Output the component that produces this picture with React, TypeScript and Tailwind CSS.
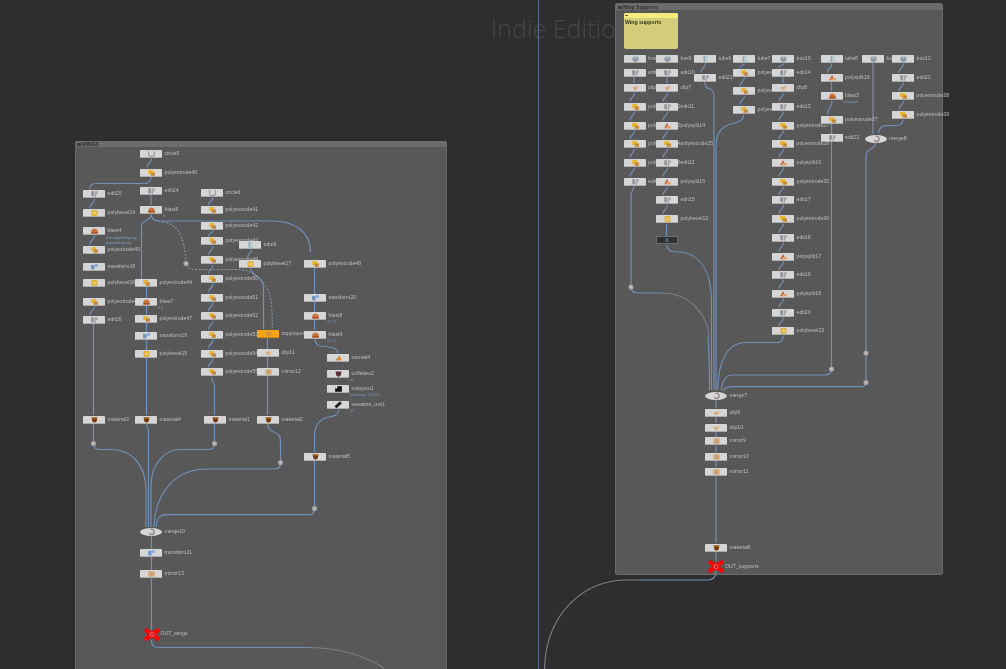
type Kind =
  | "box" | "edit" | "extrude" | "bevel" | "blast" | "transform" | "circle" | "tube" | "clip"
  | "mirror" | "material" | "normal" | "uvflatten" | "uvlayout" | "visualize" | "merge" | "split" | "copy" | "null";

type GraphNode = { name: string; x: number; y: number; kind: Kind; sub?: string };

function Icon({ kind }: { kind: Kind }) {
  switch (kind) {
    case "box":
      return (
        <g>
          <path d="M-3 -2 L0 -3.2 L3 -2 L3 1.8 L0 3.2 L-3 1.8 Z" fill="#8d9aa6" />
          <path d="M-3 -2 L0 -3.2 L3 -2 L0 -0.8 Z" fill="#b5bec6" />
        </g>
      );
    case "edit":
      return (
        <g>
          <path d="M-3.2 -2.8 H-0.6 V1 C-0.6 3 -3.2 3 -3.2 1 Z" fill="#8c9298" />
          <rect x="0.2" y="-2.8" width="3" height="3.2" fill="#a3a8ad" />
          <rect x="0.2" y="0.4" width="1.2" height="2.4" fill="#8c9298" />
        </g>
      );
    case "extrude":
      return (
        <g>
          <rect x="-3.4" y="-3" width="5" height="4" fill="#e8b733" />
          <rect x="-0.8" y="-0.6" width="4.2" height="3.4" fill="#c4893a" />
        </g>
      );
    case "bevel":
      return (
        <g>
          <rect x="-3" y="-3" width="6" height="6" rx="1" fill="#e0b23e" />
          <rect x="-1.4" y="-1.4" width="2.8" height="2.8" fill="#eecb70" />
        </g>
      );
    case "blast":
      return (
        <g>
          <path d="M-3.2 2.6 V0.4 C-3.2 -1.4 -1.4 -2.4 0 -2.4 C1.4 -2.4 3.2 -1.4 3.2 0.4 V2.6 Z" fill="#c8743a" />
          <rect x="-3.2" y="0.8" width="6.4" height="1.8" fill="#a9562a" />
        </g>
      );
    case "split":
      return (
        <g>
          <path d="M-3.4 2.4 L-0.4 -3 L1.2 1 Z" fill="#c9502c" />
          <rect x="-1.4" y="0" width="4.8" height="2.4" fill="#d9a36a" />
        </g>
      );
    case "transform":
      return (
        <g>
          <rect x="-3.4" y="-2" width="3.4" height="4.4" fill="#6f94c4" />
          <rect x="0" y="-3" width="3.4" height="3" fill="#8fb0d8" />
        </g>
      );
    case "circle":
      return <path d="M-2.8 -2.8 V0.5 C-2.8 3.4 2.8 3.4 2.8 0.5 V-2.8" fill="none" stroke="#8f959b" strokeWidth="1.1" />;
    case "tube":
      return (
        <g>
          <rect x="-2" y="-3.2" width="4" height="6.4" rx="1.3" fill="#93a9b8" />
          <rect x="-0.3" y="-3.2" width="2.3" height="6.4" rx="1" fill="#c0d0da" />
        </g>
      );
    case "clip":
      return <path d="M-3 -0.8 L3 -2 L1.2 1.6 L-1.2 2.2 Z" fill="#d9ab78" />;
    case "mirror":
      return (
        <g>
          <rect x="-3.2" y="-2.6" width="6.4" height="5.2" fill="#d3a878" />
          <rect x="-0.3" y="-2.6" width="0.6" height="5.2" fill="#b88d5c" />
        </g>
      );
    case "material":
      return (
        <g>
          <path d="M-2.8 -2.6 H2.8 L2.2 1.4 L0 2.8 L-2.2 1.4 Z" fill="#6f3a12" />
          <rect x="-2.8" y="-2.6" width="5.6" height="1.4" fill="#a8651f" />
        </g>
      );
    case "normal":
      return <path d="M-3.2 2.6 L-1 -0.4 L1 -2.4 L3.4 2.6 Z" fill="#d1923f" />;
    case "uvflatten":
      return <path d="M-3 -2.6 H3 L2.2 1.4 L0 3 L-2.2 1.4 Z" fill="#5d3034" />;
    case "uvlayout":
      return (
        <g>
          <rect x="-3.4" y="-2.8" width="6.8" height="5.6" fill="#141414" />
          <rect x="-3.4" y="-2.8" width="2.2" height="2.2" fill="#e8e8e8" />
        </g>
      );
    case "visualize":
      return <path d="M-3 2.2 L2.4 -2.6" stroke="#1b1b1b" strokeWidth="2.8" />;
    case "merge":
      return <path d="M-1 -2.6 A2.6 2.6 0 1 1 -2.2 1.2" fill="none" stroke="#8b7f88" strokeWidth="1.3" />;
    case "copy":
      return <rect x="-2.8" y="-2.4" width="5.6" height="4.8" fill="#d7962c" />;
    case "null":
      return <rect x="-1.5" y="-2" width="3" height="4" fill="#4d6070" />;
  }
}

const leftNodes: GraphNode[] = [
  { name: "circle5", x: 140, y: 153.5, kind: "circle" },
  { name: "polyextrude40", x: 140, y: 172.5, kind: "extrude" },
  { name: "edit24", x: 140, y: 191, kind: "edit" },
  { name: "blast6", x: 140, y: 210, kind: "blast", sub: "0" },
  { name: "edit25", x: 83, y: 194, kind: "edit" },
  { name: "polybevel14", x: 83, y: 212.5, kind: "bevel" },
  { name: "blast4", x: 83, y: 230.5, kind: "blast" },
  { name: "polyextrude45", x: 83, y: 249.5, kind: "extrude" },
  { name: "transform18", x: 83, y: 266.5, kind: "transform" },
  { name: "polybevel16", x: 83, y: 283, kind: "bevel" },
  { name: "polyextrude46", x: 83, y: 301.5, kind: "extrude" },
  { name: "edit26", x: 83, y: 320, kind: "edit" },
  { name: "polyextrude44", x: 135, y: 283, kind: "extrude" },
  { name: "blast7", x: 135, y: 301.5, kind: "blast", sub: "0 0" },
  { name: "polyextrude47", x: 135, y: 319, kind: "extrude" },
  { name: "transform19", x: 135, y: 335.5, kind: "transform" },
  { name: "polybevel15", x: 135, y: 353.5, kind: "bevel" },
  { name: "circle6", x: 201, y: 192.5, kind: "circle" },
  { name: "polyextrude41", x: 201, y: 210, kind: "extrude" },
  { name: "polyextrude42", x: 201, y: 225.5, kind: "extrude" },
  { name: "polyextrude43", x: 201, y: 241, kind: "extrude" },
  { name: "polyextrude49", x: 201, y: 260, kind: "extrude" },
  { name: "polyextrude50", x: 201, y: 278.5, kind: "extrude" },
  { name: "polyextrude51", x: 201, y: 297.5, kind: "extrude" },
  { name: "polyextrude52", x: 201, y: 316, kind: "extrude" },
  { name: "polyextrude53", x: 201, y: 334.5, kind: "extrude" },
  { name: "polyextrude54", x: 201, y: 353.5, kind: "extrude" },
  { name: "polyextrude55", x: 201, y: 372, kind: "extrude" },
  { name: "tube9", x: 239, y: 244.5, kind: "tube" },
  { name: "polybevel17", x: 239, y: 263.5, kind: "bevel" },
  { name: "polyextrude48", x: 304, y: 263.5, kind: "extrude" },
  { name: "transform20", x: 304, y: 297.5, kind: "transform" },
  { name: "blast8", x: 304, y: 316, kind: "blast", sub: "12 17" },
  { name: "blast9", x: 304, y: 334.5, kind: "blast", sub: "12 17" },
  { name: "copytopoints1", x: 257, y: 333.5, kind: "copy" },
  { name: "clip11", x: 257, y: 353, kind: "clip" },
  { name: "mirror12", x: 257, y: 372, kind: "mirror" },
  { name: "normal4", x: 327, y: 358, kind: "normal" },
  { name: "uvflatten2", x: 327, y: 373.5, kind: "uvflatten", sub: "uv" },
  { name: "uvlayout1", x: 327, y: 388.5, kind: "uvlayout", sub: "Coverage: 58.10%" },
  { name: "visualize_uvs1", x: 327, y: 404.5, kind: "visualize", sub: "@" },
  { name: "material3", x: 83, y: 419.5, kind: "material" },
  { name: "material4", x: 135, y: 419.5, kind: "material" },
  { name: "material1", x: 204, y: 419.5, kind: "material" },
  { name: "material2", x: 257, y: 419.5, kind: "material" },
  { name: "material5", x: 304, y: 456.5, kind: "material" },
  { name: "merge10", x: 140, y: 531.5, kind: "merge" },
  { name: "transform21", x: 140, y: 552.5, kind: "transform" },
  { name: "mirror13", x: 140, y: 573.5, kind: "mirror" },
];

const rightNodes: GraphNode[] = [
  { name: "box8", x: 623.5, y: 58.5, kind: "box" },
  { name: "edit9", x: 623.5, y: 72.5, kind: "edit" },
  { name: "clip6", x: 623.5, y: 88, kind: "clip" },
  { name: "polyextrude22", x: 623.5, y: 106.5, kind: "extrude" },
  { name: "polyextrude23", x: 623.5, y: 125.5, kind: "extrude" },
  { name: "polyextrude24", x: 623.5, y: 144, kind: "extrude" },
  { name: "polyextrude26", x: 623.5, y: 162.5, kind: "extrude" },
  { name: "edit16", x: 623.5, y: 181.5, kind: "edit" },
  { name: "box9", x: 656, y: 58.5, kind: "box" },
  { name: "edit10", x: 656, y: 72.5, kind: "edit" },
  { name: "clip7", x: 656, y: 88, kind: "clip" },
  { name: "edit11", x: 656, y: 106.5, kind: "edit" },
  { name: "polysplit14", x: 656, y: 125.5, kind: "split" },
  { name: "polyextrude25", x: 656, y: 144, kind: "extrude" },
  { name: "edit12", x: 656, y: 162.5, kind: "edit" },
  { name: "polysplit15", x: 656, y: 181.5, kind: "split" },
  { name: "edit15", x: 656, y: 200, kind: "edit" },
  { name: "polybevel12", x: 656, y: 219, kind: "bevel" },
  { name: "tube6", x: 694, y: 58.5, kind: "tube" },
  { name: "edit21", x: 694, y: 77.5, kind: "edit" },
  { name: "tube7", x: 733, y: 58.5, kind: "tube" },
  { name: "polyextrude29", x: 733, y: 72.5, kind: "extrude" },
  { name: "polyextrude30", x: 733, y: 91, kind: "extrude" },
  { name: "polyextrude31", x: 733, y: 109.5, kind: "extrude" },
  { name: "box10", x: 772, y: 58.5, kind: "box" },
  { name: "edit14", x: 772, y: 72.5, kind: "edit" },
  { name: "clip8", x: 772, y: 88, kind: "clip" },
  { name: "edit13", x: 772, y: 106.5, kind: "edit" },
  { name: "polyextrude27", x: 772, y: 125.5, kind: "extrude" },
  { name: "polyextrude28", x: 772, y: 144, kind: "extrude" },
  { name: "polysplit16", x: 772, y: 162.5, kind: "split" },
  { name: "polyextrude35", x: 772, y: 181.5, kind: "extrude" },
  { name: "edit17", x: 772, y: 200, kind: "edit" },
  { name: "polyextrude36", x: 772, y: 219, kind: "extrude" },
  { name: "edit18", x: 772, y: 237.5, kind: "edit" },
  { name: "polysplit17", x: 772, y: 256.5, kind: "split" },
  { name: "edit19", x: 772, y: 275, kind: "edit" },
  { name: "polysplit18", x: 772, y: 293.5, kind: "split" },
  { name: "edit20", x: 772, y: 312.5, kind: "edit" },
  { name: "polybevel13", x: 772, y: 331, kind: "bevel" },
  { name: "tube8", x: 820.5, y: 58.5, kind: "tube" },
  { name: "polysplit19", x: 820.5, y: 77.5, kind: "split" },
  { name: "blast3", x: 820.5, y: 96, kind: "blast", sub: "selection" },
  { name: "polyextrude37", x: 820.5, y: 119.5, kind: "extrude" },
  { name: "edit23", x: 820.5, y: 138, kind: "edit" },
  { name: "box11", x: 862, y: 58.5, kind: "box" },
  { name: "merge8", x: 864.5, y: 138.5, kind: "merge" },
  { name: "box12", x: 892, y: 58.5, kind: "box" },
  { name: "edit22", x: 892, y: 77.5, kind: "edit" },
  { name: "polyextrude38", x: 892, y: 96, kind: "extrude" },
  { name: "polyextrude39", x: 892, y: 114.5, kind: "extrude" },
  { name: "merge7", x: 705, y: 395.5, kind: "merge" },
  { name: "clip9", x: 705, y: 412.5, kind: "clip" },
  { name: "clip10", x: 705, y: 427.5, kind: "clip" },
  { name: "mirror9", x: 705, y: 441, kind: "mirror" },
  { name: "mirror10", x: 705, y: 456.5, kind: "mirror" },
  { name: "mirror11", x: 705, y: 471.5, kind: "mirror" },
  { name: "material6", x: 705, y: 547.5, kind: "material" },
];

const nodes = [...leftNodes, ...rightNodes];

// short S-shaped wire between two stacked nodes
const s = (cx: number, y1: number, y2: number) => {
  const m = (y1 + y2) / 2;
  return `M${cx + 0.5} ${y1 + 5} C${cx + 0.5} ${m} ${cx - 4} ${m} ${cx - 4} ${y2 - 5}`;
};
const v = (x: number, y1: number, y2: number) => `M${x} ${y1} V${y2}`;

const wires = [
  // wings
  s(151, 153.5, 172.5),
  "M151 177 C151 181 148 183.5 144 183.5 H96 C92 183.5 89.5 186 89.5 190",
  v(151, 195, 205),
  s(94, 194, 212.5),
  s(94, 230.5, 249.5),
  s(94, 301.5, 320),
  v(93.5, 324, 415),
  v(93.5, 423, 443),
  "M151 215 C151 219 147 220 145 221 C142.5 222 141.5 224 141.5 227 V279",
  "M151 215 C152 219 155 221 160 221 H272 C295 221 310.5 232 310.5 252",
  v(314.5, 267, 330),
  "M315 339 C315 344 318 346 323 346.5 C332 347 337.5 348 338 353",
  v(146.5, 287, 415),
  "M146.5 423 C146.5 427 148.5 427 148.5 431 V527",
  s(212.5, 192.5, 210),
  s(212.5, 225.5, 241),
  s(212.5, 241, 260),
  s(212.5, 260, 278.5),
  s(212.5, 278.5, 297.5),
  s(212.5, 297.5, 316),
  s(212.5, 316, 334.5),
  s(212.5, 334.5, 353.5),
  s(212.5, 353.5, 372),
  "M211.5 377 C211.5 383 214.5 382 214.5 387 V415",
  v(214.5, 423, 443),
  s(251, 244.5, 263.5),
  "M250.5 268 C251 273 255 275 258 277 C262 280 263.5 283 263.5 289 V329",
  v(267.5, 338, 415),
  "M267.5 423 C267.5 429 270 431 274 432 C279 433.5 280.5 436 280.5 441 V462",
  "M339 410 C338 415 335 416 329 417 C319 419 314.5 425 314.5 436 V452",
  v(314.5, 461, 508),
  "M93.5 443 C93.5 447 95 449.5 99 449.5 H112 C132 449.5 146 466 146 490 V527",
  "M214.5 443 C214.5 447 213 449.5 209 449.5 H180 C164 449.5 151 465 151 486 V527",
  "M280.5 463 C280.5 466.5 279 469 275 469 H207 C176 469 155 492 154 527",
  "M314.5 509 C314.5 512.5 312.5 514.7 309 514.7 H166 C160 514.7 157 518 156 527",
  v(151.5, 536, 630),
  "M151.5 640 C151.5 645 153 647.5 158 647.5 H310",
  // supports
  v(634, 77, 83),
  s(634, 88, 106.5),
  s(634, 106.5, 125.5),
  s(634, 125.5, 144),
  s(634, 144, 162.5),
  s(634, 162.5, 181.5),
  "M634 186 C634 190 631 191 631 195 V287",
  "M631 287 C631 291 633 293 638 293 H662",
  v(667, 77, 83),
  s(667, 88, 106.5),
  s(667, 106.5, 125.5),
  s(667, 125.5, 144),
  s(667, 144, 162.5),
  s(667, 162.5, 181.5),
  s(667, 181.5, 200),
  s(667, 200, 219),
  v(666.5, 224, 236),
  "M667 245 C667 250 670 252 676 252 H680 C698 254 711 268 711.5 300 V390",
  "M708 337 C709 350 709.5 365 709.5 390",
  s(705, 58.5, 77.5),
  "M705 82 C705 87 707 88 710 89 C713 90 714 92 714 96 V390",
  s(744, 58.5, 72.5),
  s(744, 72.5, 91),
  s(744, 91, 109.5),
  "M743.5 115 C743.5 121 738 122 731 124 C721 127 716 133 716 147 V390",
  s(783, 58.5, 72.5),
  v(783, 77, 83),
  s(783, 88, 106.5),
  s(783, 106.5, 125.5),
  s(783, 125.5, 144),
  s(783, 144, 162.5),
  s(783, 162.5, 181.5),
  s(783, 181.5, 200),
  s(783, 200, 219),
  s(783, 219, 237.5),
  s(783, 237.5, 256.5),
  s(783, 256.5, 275),
  s(783, 275, 293.5),
  s(783, 293.5, 312.5),
  s(783, 312.5, 331),
  "M783 336 C783 340 782 342.5 778 342.5 H744 C728 344 718.5 358 717.5 390",
  s(831.5, 58.5, 77.5),
  v(831.5, 82, 91),
  s(831.5, 96, 119.5),
  v(831.5, 124, 134),
  v(831.5, 142, 369),
  "M831.5 369 C831.5 373 829.5 375 825 375 H732 C726 375 722 381 721.5 390",
  v(873, 63, 134),
  "M875.5 143 C875 147 873 148 870 149.5 C867 151 866 153 866 157 V382",
  s(903, 58.5, 77.5),
  s(903, 77.5, 96),
  s(903, 96, 114.5),
  "M903 120 C902.5 124 900 125.5 896 125.5 H886 C881 126 879 129 878.5 133",
  "M866 382 C866 385 864.5 386.7 861 386.7 H735 C728 386.7 724 388 723 391",
  v(716, 400, 408),
  v(716, 417, 423),
  v(716, 432, 437),
  v(716, 445.5, 452),
  v(716, 461, 467),
  v(716, 476, 543),
  v(716, 552, 561),
  "M716 571 C716 577 713 580 708 580 H640",
];

// wires that run out of the coloured range and read as plain grey
const greyWires = [
  "M310 647.5 C340 648 365 656 384 668",
  "M662 293 C690 293 708 315 709 337",
  "M640 580 H627 C585 580 546 612 544.5 669",
];

const dots: [number, number][] = [
  [93.5, 443.5],
  [214.5, 443.5],
  [280.5, 462.5],
  [314.5, 508.5],
  [186, 263.5],
  [631, 287],
  [831.5, 369],
  [866, 353],
  [866, 382.5],
];

const labelFont = "font-['Liberation_Sans',sans-serif]";

function OutNode({ x, y, label, dx }: { x: number; y: number; label: string; dx: number }) {
  return (
    <>
      <svg className="absolute" style={{ left: x - 9, top: y - 6.5 }} width="18" height="13" viewBox="-9 -6.5 18 13">
        <path d="M-5.5 -4 L5.5 4 M5.5 -4 L-5.5 4" stroke="#ff0000" strokeWidth="4.4" strokeLinecap="round" />
        <circle r="3.6" fill="#ff0000" />
        <circle r="2" fill="none" stroke="#e9a0a0" strokeWidth="0.8" />
      </svg>
      <span
        className={`absolute whitespace-nowrap text-[5.2px] leading-[7px] text-[#bdbdbd] ${labelFont}`}
        style={{ left: x + dx, top: y - 4 }}
      >
        {label}
      </span>
    </>
  );
}

export default function App() {
  return (
    <div className="relative h-[669px] w-[1006px] overflow-hidden bg-[#2e2e2e]">
      <div className="absolute inset-0 blur-[0.35px]">
        <span className="absolute left-[491px] top-[11px] whitespace-nowrap font-['Open_Sans',sans-serif] text-[25px] font-light leading-[34px] text-[#474747]">
          Indie Edition
        </span>

        <div className="absolute bottom-0 left-[538px] top-0 w-px bg-[#5f7390]" />

        {/* network boxes */}
        <div className="absolute left-[74.5px] top-[141px] h-[528px] w-[372px] rounded-t-[2px] border-x border-[#666666] bg-[#585858]">
          <div className="flex h-[6px] items-center gap-[1px] bg-[#6c6c6c] pl-[1.5px] font-['Liberation_Sans',sans-serif] text-[5px] font-bold leading-[6px] text-[#2e2e2e]">
            <span className="h-[3px] w-[4px] bg-[#3f3f3f]" />
            <span>WINGS</span>
          </div>
        </div>
        <div className="absolute left-[615px] top-[3px] h-[572px] w-[327.5px] rounded-[2px] border border-[#6a6a6a] bg-[#585858]">
          <div className="flex h-[6px] items-center gap-[1px] bg-[#6c6c6c] pl-[1.5px] font-['Liberation_Sans',sans-serif] text-[5px] font-bold leading-[6px] text-[#2e2e2e]">
            <span className="h-[3px] w-[4px] bg-[#3f3f3f]" />
            <span>Wing Supports</span>
          </div>
          <div className="absolute left-[7.5px] top-[9px] h-[36px] w-[54.5px] overflow-hidden rounded-[2px] bg-[#d4ce7a]">
            <div className="flex h-[5px] items-center bg-[#f4ec7c] pl-[1.5px]">
              <span className="h-[1px] w-[3px] bg-[#666666]" />
            </div>
            <p className="pl-[1.5px] pt-[0.5px] font-['Liberation_Sans',sans-serif] text-[5.2px] font-bold leading-[7px] text-[#33331a]">
              Wing supports
            </p>
          </div>
        </div>

        {/* wires */}
        <svg className="absolute inset-0" width="1006" height="669" fill="none">
          {wires.map((d, i) => (
            <path key={i} d={d} stroke="#7090b8" strokeWidth="1.2" />
          ))}
          {greyWires.map((d, i) => (
            <path key={i} d={d} stroke="#7a7f87" strokeWidth="1.1" />
          ))}
          <path
            d="M151 215 C152 220 156 221.5 163 222 C176 223 185 235 186 263.5 C186 268 190 269.5 198 269.5 H240 C254 270 266 282 270 296 C272 305 272.3 315 272.3 328"
            stroke="#8397ae"
            strokeWidth="1.1"
            strokeDasharray="2 1.6"
          />
          {dots.map(([x, y]) => (
            <g key={`${x}-${y}`}>
              <circle cx={x} cy={y} r="2.6" fill="#a3a3a3" />
              <circle cx={x} cy={y} r="1" fill="#cfcfcf" />
            </g>
          ))}
        </svg>

        {/* labels sit under the nodes, next node cuts them off */}
        {nodes.map((n) => (
          <span
            key={`label-${n.name}`}
            className={`absolute whitespace-nowrap text-[5.2px] leading-[7px] text-[#bdbdbd] ${labelFont}`}
            style={{ left: n.x + 24.5, top: n.y - 4 }}
          >
            {n.name}
          </span>
        ))}
        {nodes
          .filter((n) => n.sub)
          .map((n) => (
            <span
              key={`sub-${n.name}`}
              className={`absolute whitespace-nowrap text-[3.6px] leading-[5px] text-[#7f9cc4] ${labelFont}`}
              style={{ left: n.x + 23, top: n.y + 4 }}
            >
              {n.sub}
            </span>
          ))}
        <span className={`absolute left-[106px] top-[236px] text-[3.6px] leading-[5px] text-[#7f9cc4] ${labelFont}`}>
          non-edge/thingroup
          <br />
          panel/thingroup
        </span>

        {nodes.map((n) => (
          <svg
            key={n.name}
            className="absolute"
            style={{ left: n.x, top: n.y - 4 }}
            width="22"
            height="8"
            viewBox="-11 -4 22 8"
          >
            {n.kind === "merge" ? (
              <ellipse rx="11" ry="4" fill="#d6d6d6" />
            ) : (
              <>
                <rect x="-11" y="-4" width="22" height="8" rx="0.8" fill={n.kind === "copy" ? "#f8a51c" : "#d6d6d6"} />
                <rect x="-11" y="3.2" width="22" height="0.8" fill={n.kind === "copy" ? "#c9841a" : "#a4a4a4"} />
              </>
            )}
            <g transform="translate(0.5 0)">
              <Icon kind={n.kind} />
            </g>
          </svg>
        ))}

        {/* bypassed null in the supports column */}
        <svg className="absolute left-[656px] top-[236px]" width="22" height="8" viewBox="-11 -4 22 8">
          <rect x="-10.5" y="-3.5" width="21" height="7" fill="#2d3034" stroke="#7c7c7c" strokeWidth="0.8" />
          <Icon kind="null" />
        </svg>

        <OutNode x={151.5} y={634} label="OUT_wings" dx={9} />
        <OutNode x={716} y={566.5} label="OUT_supports" dx={9} />
      </div>
    </div>
  );
}
